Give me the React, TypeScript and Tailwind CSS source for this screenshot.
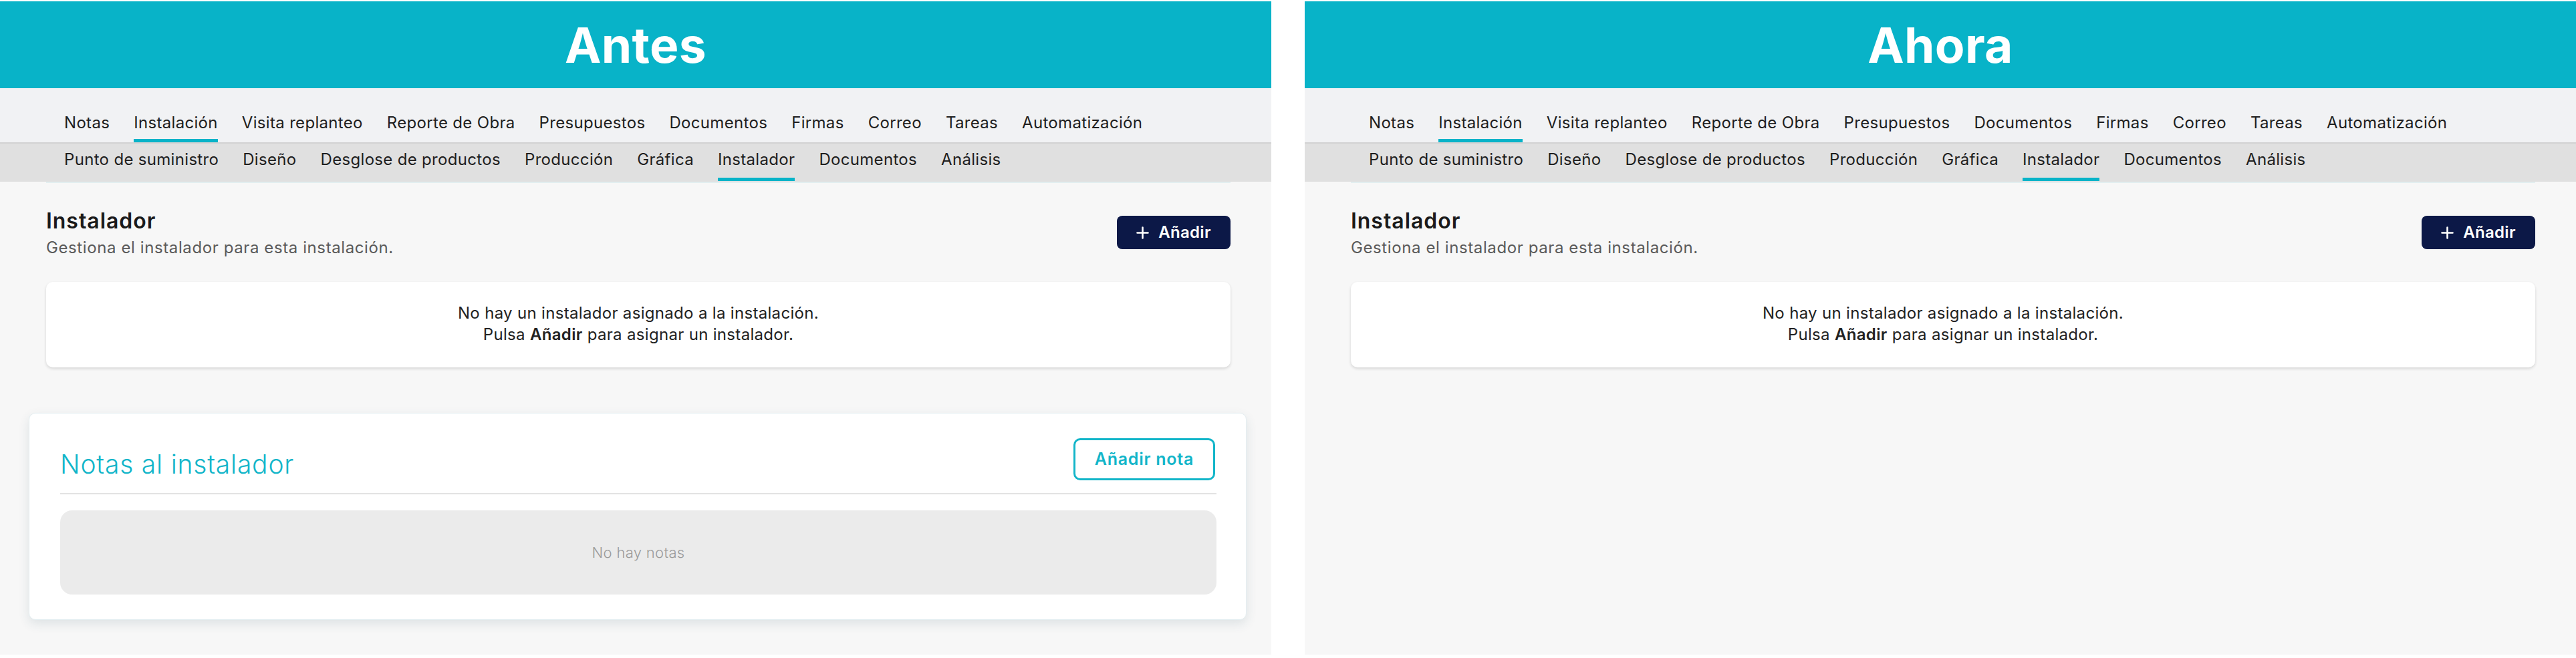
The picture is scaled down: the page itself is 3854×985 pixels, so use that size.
import React from "react";

const NAV1 = [
  "Notas",
  "Instalación",
  "Visita replanteo",
  "Reporte de Obra",
  "Presupuestos",
  "Documentos",
  "Firmas",
  "Correo",
  "Tareas",
  "Automatización",
];
const NAV2 = [
  "Punto de suministro",
  "Diseño",
  "Desglose de productos",
  "Producción",
  "Gráfica",
  "Instalador",
  "Documentos",
  "Análisis",
];

function PlusIcon() {
  return (
    <svg width="19" height="19" viewBox="0 0 19 19" fill="none">
      <path d="M9.5 1.5v16M1.5 9.5h16" stroke="white" strokeWidth="2.6" strokeLinecap="round" />
    </svg>
  );
}

function Panel({ title, showNotes }: { title: string; showNotes: boolean }) {
  return (
    <div className="w-[1902px] h-[978px] bg-[#f7f7f7] flex flex-col shrink-0 overflow-hidden">
      <div className="h-[130px] bg-[#08b3c8] flex items-center justify-center">
        <h1 className="text-white text-[73px] font-bold leading-none" style={{ fontFamily: "Inter, 'Liberation Sans', sans-serif" }}>
          {title}
        </h1>
      </div>
      <div className="h-[81px] bg-[#f1f2f4] flex items-end pl-[96px] gap-[36px]">
        {NAV1.map((n) => (
          <div key={n} className="flex flex-col">
            <span className="text-[24px] leading-[32px] text-[#1e1e1e] whitespace-nowrap">{n}</span>
            <div className={n === "Instalación" ? "mt-[8px] h-[5px] bg-[#08b3c8]" : "mt-[8px] h-[5px]"} />
          </div>
        ))}
      </div>
      <div className="h-[2px] bg-[#d2d2d2]" />
      <div className="h-[57px] bg-[#e0e0e0] flex items-end pl-[96px] gap-[36px]">
        {NAV2.map((n, i) => (
          <div key={n + i} className="flex flex-col pb-[1px]">
            <span className="text-[24px] leading-[32px] text-[#1e1e1e] whitespace-nowrap">{n}</span>
            <div className={n === "Instalador" ? "mt-[11px] h-[5px] bg-[#08b3c8]" : "mt-[11px] h-[5px]"} />
          </div>
        ))}
      </div>
      <div className="pl-[69px] pr-[61px] flex flex-col">
        <div className="h-[2px] bg-[#e2eef0]" />
        <div className="pt-[37px] flex justify-between items-start">
          <div className="flex flex-col">
            <h2 className="text-[32px] leading-[40px] font-semibold text-[#1a1a1a] tracking-[0.03em]">Instalador</h2>
            <p className="mt-[4px] text-[24px] leading-[32px] text-[#5a5a5a] tracking-[0.025em]">
              Gestiona el instalador para esta instalación.
            </p>
          </div>
          <button className="mt-[12px] h-[50px] w-[170px] rounded-[8px] bg-[#0c1847] flex items-center justify-center gap-[14px] text-white text-[24px] font-semibold">
            <PlusIcon />
            <span>Añadir</span>
          </button>
        </div>
        <div className="mt-[35px] bg-white rounded-[10px] shadow-[0_2px_4px_rgba(0,0,0,0.14)] pt-[31px] pb-[33px] flex flex-col items-center text-[24px] leading-[32px] text-[#222222]">
          <p>No hay un instalador asignado a la instalación.</p>
          <p>
            Pulsa <span className="font-semibold">Añadir</span> para asignar un instalador.
          </p>
        </div>
        {showNotes && (
          <div className="mt-[68px] -ml-[26px] -mr-[24px] bg-white rounded-[10px] border border-[#e4eef1] shadow-[0_6px_16px_rgba(40,80,100,0.12)] pt-[37px] pb-[37px] pl-[46px] pr-[44px] flex flex-col">
            <div className="flex justify-between items-start">
              <h3 className="mt-[15px] text-[39px] leading-[48px] font-light text-[#12b5c9] tracking-[0.02em]">Notas al instalador</h3>
              <button className="h-[63px] px-[29px] rounded-[10px] border-[3px] border-[#12b5c9] text-[#12b5c9] text-[25px] font-semibold tracking-[0.03em] mr-[2px]">
                Añadir nota
              </button>
            </div>
            <div className="mt-[19px] h-[2px] bg-[#e3e3e3]" />
            <div className="mt-[24px] h-[126px] rounded-[18px] bg-[#ebebeb] flex items-center justify-center">
              <span className="text-[22px] leading-[30px] font-light text-[#9a9a9a]">No hay notas</span>
            </div>
          </div>
        )}
      </div>
    </div>
  );
}

export default function App() {
  return (
    <div
      className="w-[3854px] h-[985px] bg-white pt-[2px] flex gap-[50px] tracking-[0.02em]"
      style={{ fontFamily: "Inter, 'Noto Sans', 'Liberation Sans', sans-serif" }}
    >
      <Panel title="Antes" showNotes={true} />
      <Panel title="Ahora" showNotes={false} />
    </div>
  );
}
